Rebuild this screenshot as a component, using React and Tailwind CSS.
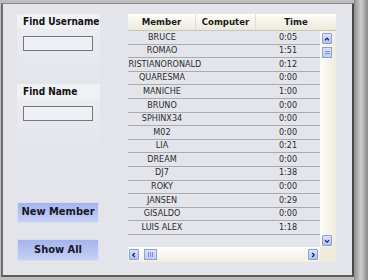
const rows = [
  ['BRUCE', '0:05'],
  ['ROMAO', '1:51'],
  ['CRISTIANORONALD', '0:12'],
  ['QUARESMA', '0:00'],
  ['MANICHE', '1:00'],
  ['BRUNO', '0:00'],
  ['SPHINX34', '0:00'],
  ['M02', '0:00'],
  ['LIA', '0:21'],
  ['DREAM', '0:00'],
  ['DJ7', '1:38'],
  ['ROKY', '0:00'],
  ['JANSEN', '0:29'],
  ['GISALDO', '0:00'],
  ['LUIS ALEX', '1:18'],
]

const font = { fontFamily: "'DejaVu Sans Condensed', 'DejaVu Sans', sans-serif" }

function Chevron({ dir }) {
  const d = {
    up: 'M2.5 6.5 L5 4 L7.5 6.5',
    down: 'M2.5 4 L5 6.5 L7.5 4',
    left: 'M6 2.5 L3.5 5 L6 7.5',
    right: 'M4 2.5 L6.5 5 L4 7.5',
  }[dir]
  return (
    <svg width="10" height="10" viewBox="0 0 10 10">
      <path d={d} fill="none" stroke="#1c2a66" strokeWidth="1.6" />
    </svg>
  )
}

function ScrollBtn({ children }) {
  return (
    <div className="w-[10px] h-[11px] flex items-center justify-center border border-[#8d9fda] bg-gradient-to-b from-[#dbe2fb] to-[#b3c1f1] rounded-[1px]">
      {children}
    </div>
  )
}

function FindPanel({ label, tall }) {
  return (
    <div className={`w-[83px] ${tall ? 'h-[66px]' : 'h-[61px]'} rounded-[2px] bg-gradient-to-b from-[#eceef3] to-[#e4e6ec]`}>
      <div className="h-[15px] bg-[#eff1f5] flex items-center pl-[6px] whitespace-nowrap text-[10px] font-bold text-[#111]">
        {label}
      </div>
      <div className="ml-[6px] mt-[7px] w-[70px] h-[15px] border border-[#777] bg-[#eef0f6]" />
    </div>
  )
}

function BlueButton({ children, h }) {
  return (
    <div className={`w-[82px] ${h} flex items-center justify-center whitespace-nowrap border border-[#d6ddf7] bg-gradient-to-b from-[#a6b3eb] to-[#c6d0f6] text-[11px] font-bold text-[#15172a]`}>
      {children}
    </div>
  )
}

export default function App() {
  return (
    <div className="w-[368px] h-[280px] bg-[#bdbdbd] flex overflow-hidden" style={font}>
      {/* Frame */}
      <div className="mt-[3px] ml-[1px] w-[353px] h-[274px] border-l-2 border-t border-r-2 border-b-2 border-l-[#6e6e6e] border-t-[#8a8a8a] border-r-[#4a4a4a] border-b-[#5c5c5c] bg-[#e3e5eb] flex pt-[10px] pl-[14px]">
        {/* Left column */}
        <div className="w-[83px] flex flex-col">
          <FindPanel label="Find Username" tall />
          <div className="mt-[4px]">
            <FindPanel label="Find Name" />
          </div>
          <div className="mt-[57px]">
            <BlueButton h="h-[21px]">New Member</BlueButton>
          </div>
          <div className="mt-[16px]">
            <BlueButton h="h-[22px]">Show All</BlueButton>
          </div>
        </div>

        {/* Table */}
        <div className="ml-[28px] w-[208px] h-[248px] overflow-hidden flex flex-col">
          <div className="h-[17px] flex bg-gradient-to-b from-[#fffef9] to-[#ece9dc] border-b border-[#c9c6b6] text-[9.5px] font-bold text-[#1a1a1a]">
            <div className="w-[68px] flex items-center justify-center border-r border-[#e2dfd0]">Member</div>
            <div className="w-[60px] flex items-center justify-center border-r border-[#e2dfd0]">Computer</div>
            <div className="flex-1 flex items-center justify-center">Time</div>
          </div>
          <div className="flex h-[216px]">
            <div className="w-[192px] flex flex-col">
              {rows.map(([name, time]) => (
                <div key={name} className="h-[13.6px] flex items-center border-b border-[#a9abb0] text-[9px] text-[#2b2b2b]">
                  <div className="w-[68px] flex justify-center whitespace-nowrap">{name}</div>
                  <div className="w-[60px]" />
                  <div className="flex-1 flex justify-center">{time}</div>
                </div>
              ))}
            </div>
            <div className="w-[16px] bg-gradient-to-r from-[#fdfdf8] to-[#efecdd] flex flex-col pl-[2px] pt-[2px]">
              <ScrollBtn><Chevron dir="up" /></ScrollBtn>
              <div className="mt-[3px] w-[10px] h-[11px] border border-[#8d9fda] bg-gradient-to-b from-[#dbe2fb] to-[#c0ccf4] flex flex-col items-center justify-center gap-[1px]">
                <div className="w-[5px] h-px bg-[#7f90cc]" />
                <div className="w-[5px] h-px bg-[#7f90cc]" />
              </div>
              <div className="mt-auto mb-[1px]">
                <ScrollBtn><Chevron dir="down" /></ScrollBtn>
              </div>
            </div>
          </div>
          <div className="flex h-[15px]">
            <div className="w-[192px] bg-gradient-to-b from-[#fefefc] to-[#f1eee2] flex items-center pl-[1px]">
              <ScrollBtn><Chevron dir="left" /></ScrollBtn>
              <div className="ml-[5px] w-[13px] h-[11px] border border-[#8d9fda] bg-gradient-to-b from-[#dbe2fb] to-[#c0ccf4] flex items-center justify-center gap-[1px]">
                <div className="w-px h-[5px] bg-[#7f90cc]" />
                <div className="w-px h-[5px] bg-[#7f90cc]" />
                <div className="w-px h-[5px] bg-[#7f90cc]" />
              </div>
              <div className="ml-auto mr-[2px]">
                <ScrollBtn><Chevron dir="right" /></ScrollBtn>
              </div>
            </div>
            <div className="flex-1 bg-[#efecdd]" />
          </div>
        </div>
      </div>
      {/* Right shadow */}
      <div className="flex-1 bg-gradient-to-r from-[#8f8f8f] via-[#cfcfcf] to-[#8a8a8a]" />
    </div>
  )
}
